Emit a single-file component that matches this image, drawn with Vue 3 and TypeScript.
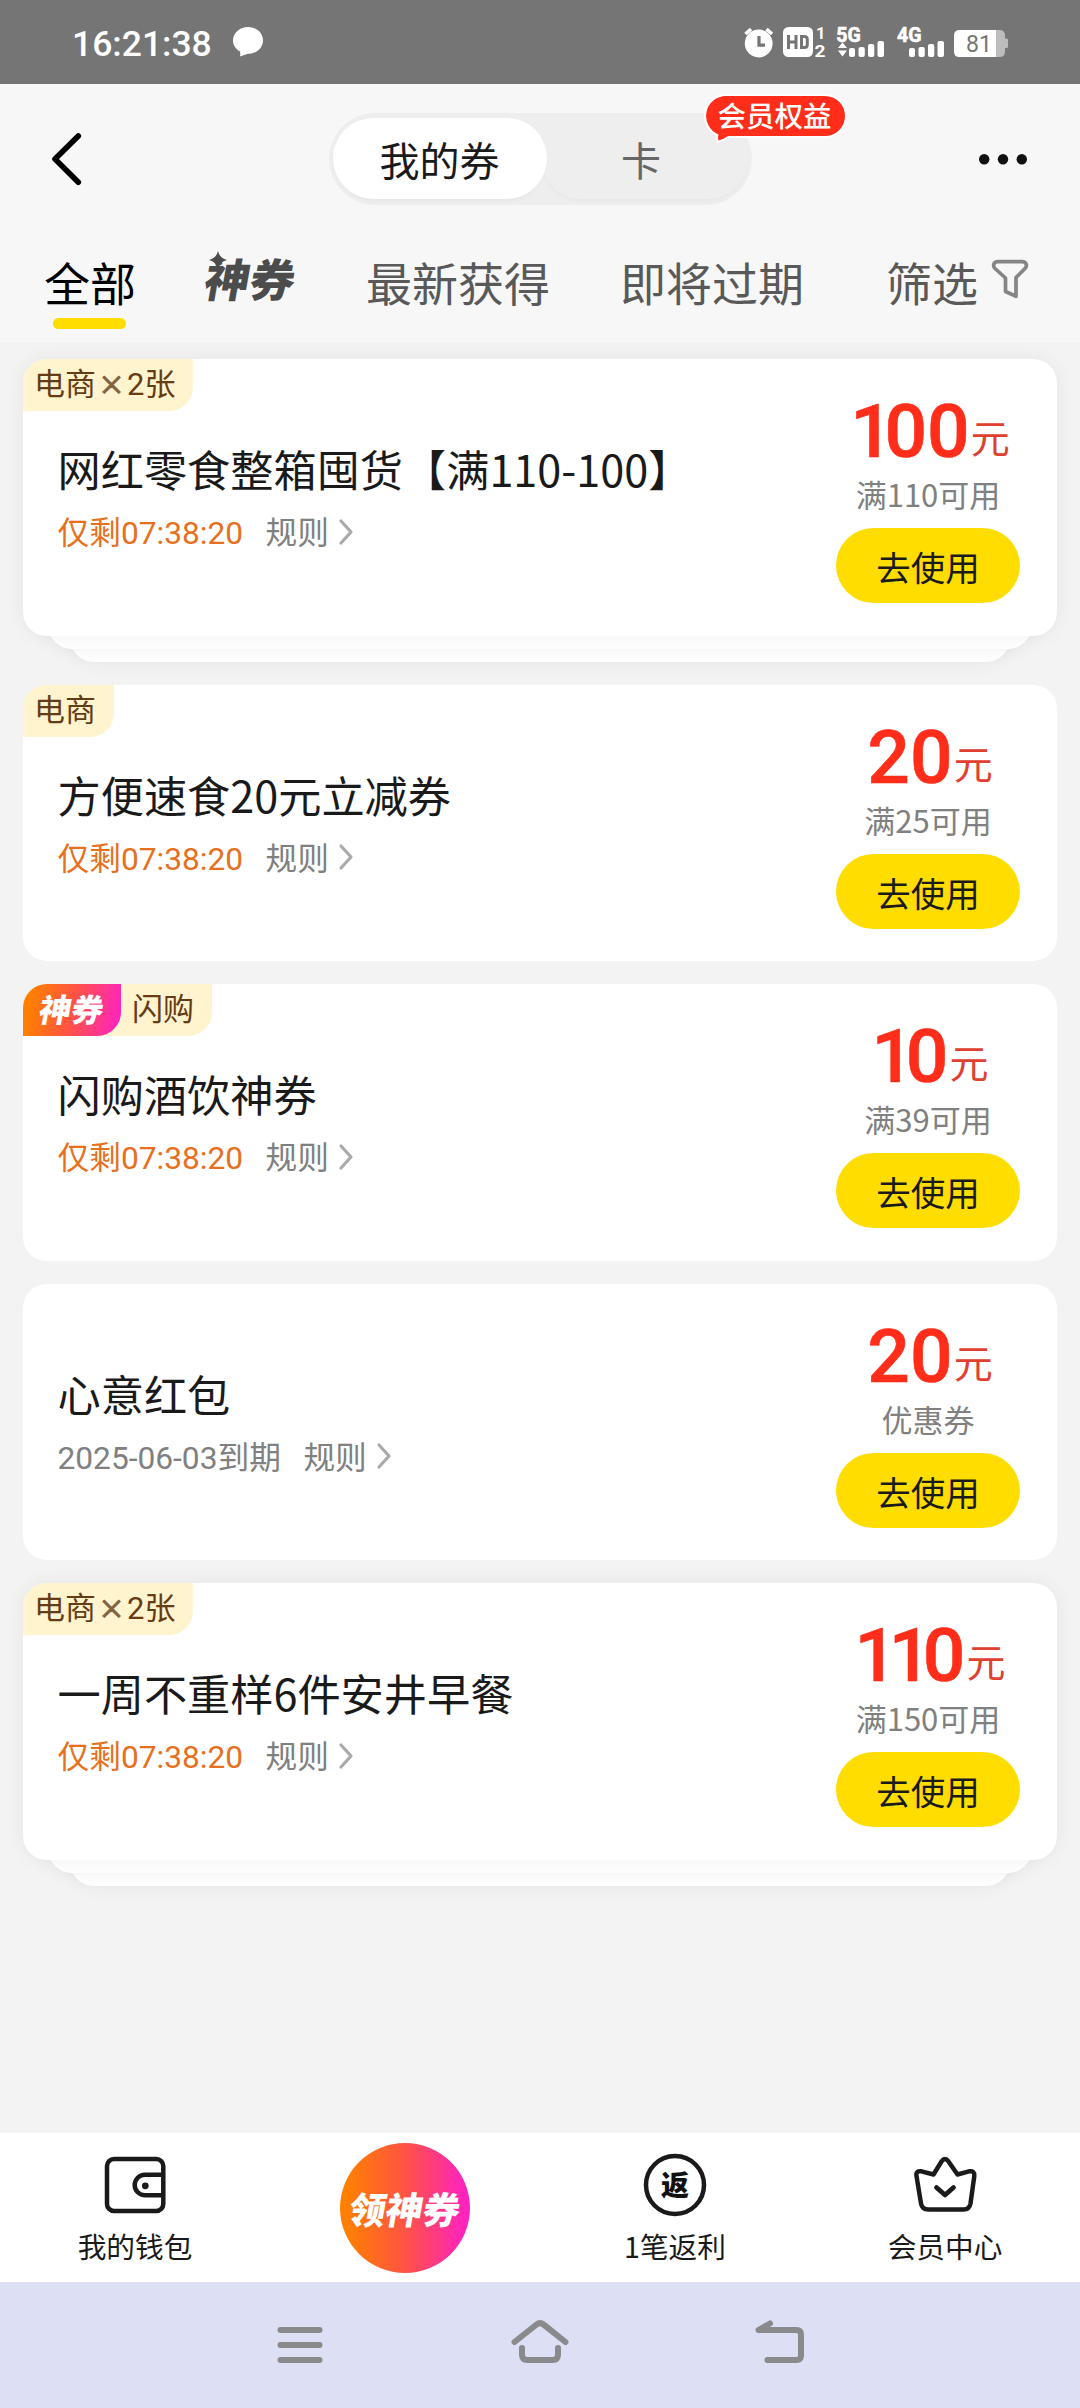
<script setup lang="ts">
interface Coupon {
  tag?: string
  count?: number
  magic?: boolean
  title: string
  left?: string
  expire?: string
  amount: string
  limit: string
  stacked?: boolean
}

const coupons: Coupon[] = [
  { tag: '电商', count: 2, title: '网红零食整箱囤货【满110-100】', left: '07:38:20', amount: '100', limit: '满110可用', stacked: true },
  { tag: '电商', title: '方便速食20元立减券', left: '07:38:20', amount: '20', limit: '满25可用' },
  { tag: '闪购', magic: true, title: '闪购酒饮神券', left: '07:38:20', amount: '10', limit: '满39可用' },
  { title: '心意红包', expire: '2025-06-03', amount: '20', limit: '优惠券' },
  { tag: '电商', count: 2, title: '一周不重样6件安井早餐', left: '07:38:20', amount: '110', limit: '满150可用', stacked: true },
]
</script>

<template>
  <div class="page">
    <div class="status">
      <span class="clock">16:21:38</span>
      <svg class="bubble" width="30" height="30" viewBox="0 0 30 30">
        <path d="M15 0C23.300 0 30 6 30 13.400S23.300 26.800 15 26.800C12.500 27.600 10 28.600 7.200 29.500V24.600C2.900 22.200 0 18.200 0 13.400 0 6 6.700 0 15 0Z" fill="#fff" />
      </svg>
      <svg class="sys" width="270" height="54" viewBox="742 15 270 54">
        <g fill="#fff">
          <circle cx="758.700" cy="43.500" r="13.900" />
          <path d="M745.500 34L751 29M772 34L766.500 29" stroke="#fff" stroke-width="3.600" />
          <path d="M759 36V45.200H765" fill="none" stroke="#757575" stroke-width="3.200" />
          <rect x="783" y="27" width="30" height="30" rx="5.500" />
          <path d="M788.500 35V49M796 35V49M788.500 42H796M801.500 36.500H804.500Q807.300 36.500 807.300 39.500V44.500Q807.300 47.500 804.500 47.500H801.500Z" fill="none" stroke="#757575" stroke-width="3" />
          <path d="M842.500 42.500L847 48H838ZM842.500 56.500L847 50.500H838Z" />
          <rect x="849" y="48" width="6" height="9" rx="2" />
          <rect x="858.500" y="47" width="6.300" height="10" rx="2" />
          <rect x="868" y="44" width="6.300" height="13" rx="2" />
          <rect x="877.500" y="41" width="6.500" height="16" rx="2" />
          <rect x="909" y="48" width="6" height="9" rx="2" />
          <rect x="918.500" y="47" width="6.300" height="10" rx="2" />
          <rect x="928" y="44" width="6.300" height="13" rx="2" />
          <rect x="937.500" y="41" width="6.500" height="16" rx="2" />
        </g>
        <path d="M996 30H999.500Q1005 30 1005 35.500V38.500H1006.500Q1008 38.500 1008 40V46.500Q1008 48 1006.500 48H1005V51.500Q1005 57 999.500 57H996Z" fill="#bcbcbc" />
        <path d="M996 30V57H959.500Q954 57 954 51.500V35.500Q954 30 959.500 30Z" fill="#fff" />
        <g class="systext">
          <text x="816" y="39" font-size="16.500">1</text>
          <text x="814.500" y="57" font-size="17" textLength="11" lengthAdjust="spacingAndGlyphs">2</text>
          <text class="net" x="836.300" y="41.800" font-size="20.500" textLength="24.500" lengthAdjust="spacingAndGlyphs">5G</text>
          <text class="net" x="897" y="41.800" font-size="20.500" textLength="24.500" lengthAdjust="spacingAndGlyphs">4G</text>
          <text class="level" x="966" y="52" font-size="23">81</text>
        </g>
      </svg>
    </div>

    <div class="top">
      <div class="header">
        <svg width="40" height="60" viewBox="48 129 40 60">
          <path d="M78.300 136L55 159L78.300 182.300" fill="none" stroke="#000" stroke-width="5.600" stroke-linecap="round" stroke-linejoin="round" />
        </svg>
        <div class="segment">
          <div class="seg on">我的券</div>
          <div class="seg">卡</div>
          <div class="promo">
            <svg width="145" height="50" viewBox="702 93 145 50">
              <path d="M725 96H824A20 20 0 0 1 824 136H727Q722 139.500 717.500 140.500Q716.500 138 717.500 134.500A20 20 0 0 1 725 96Z" fill="#ff2d19" stroke="#fff" stroke-width="4" paint-order="stroke" />
            </svg>
            <span>会员权益</span>
          </div>
        </div>
        <svg width="60" height="20" viewBox="973 148 60 20" fill="#111">
          <circle cx="984.200" cy="158.200" r="5.200" /><circle cx="1003" cy="158.200" r="5.200" /><circle cx="1021.800" cy="158.200" r="5.200" />
        </svg>
      </div>
      <div class="tabs">
        <div class="tab active">全部</div>
        <div class="tab logo"><span>神券</span>
          <svg width="18" height="18" viewBox="0 0 18 18"><path d="M9 0Q10.500 7 18 9Q10.500 11 9 18Q7.500 11 0 9Q7.500 7 9 0Z" fill="#4c4c4c" /></svg>
        </div>
        <div class="tab latest">最新获得</div>
        <div class="tab soon">即将过期</div>
        <div class="tab filter">筛选</div>
        <svg class="funnel" width="38" height="42" viewBox="991 258 38 42">
          <path d="M998 261.700H1022C1026.500 261.700 1027.500 266 1025 268.500L1016 277.500V296.300L1005.500 291.500V278L995 268.500C992.500 266 993.500 261.700 998 261.700Z" fill="none" stroke="#858585" stroke-width="3.700" stroke-linejoin="round" />
        </svg>
      </div>
    </div>

    <div class="list">
      <div v-for="(c, i) in coupons" :key="i" class="item" :class="{ stacked: c.stacked }">
        <div class="card">
          <div v-if="c.tag" class="tags">
            <div v-if="c.magic" class="magic"><span>神券</span></div>
            <div class="tag">{{ c.tag }}<template v-if="c.count"><span class="times">×</span><span class="num">{{ c.count }}</span>张</template></div>
          </div>
          <div class="info">
            <div class="title">{{ c.title }}</div>
            <div class="meta">
              <span v-if="c.left" class="remain">仅剩<span class="num">{{ c.left }}</span></span>
              <span v-else><span class="num">{{ c.expire }}</span>到期</span>
              <span class="rule">规则</span>
              <svg width="16" height="28" viewBox="0 0 16 28"><path d="M3 3L13 14L3 25" fill="none" stroke="#aaa" stroke-width="3.200" stroke-linecap="round" stroke-linejoin="round" /></svg>
            </div>
          </div>
          <div class="action">
            <div class="amount"><span v-for="(d, k) in c.amount.split('')" :key="k" class="digit" :class="{ one: d === '1' }">{{ d }}</span><span class="yuan">元</span></div>
            <div class="limit">{{ c.limit }}</div>
            <div class="btn">去使用</div>
          </div>
        </div>
        <template v-if="c.stacked">
          <div class="layer first"></div>
          <div class="layer second"></div>
        </template>
      </div>
    </div>

    <div class="dock">
      <div class="entry">
        <svg width="70" height="66" viewBox="100 2152 70 66" fill="none" stroke="#1a1a1a" stroke-width="4.500">
          <rect x="107" y="2159" width="56.300" height="52" rx="7" />
          <path d="M163 2174.700H145A10.300 10.300 0 0 0 145 2195.300H163" />
          <circle cx="145.300" cy="2185.800" r="3.400" fill="#1a1a1a" stroke="none" />
        </svg>
        <span>我的钱包</span>
      </div>
      <div class="entry"><div class="grab"><span>领神券</span></div></div>
      <div class="entry">
        <svg width="70" height="66" viewBox="640 2152 70 66">
          <circle cx="675" cy="2185" r="29" fill="none" stroke="#1a1a1a" stroke-width="4.500" />
          <text class="fan" x="675" y="2196" text-anchor="middle">返</text>
        </svg>
        <span>1笔返利</span>
      </div>
      <div class="entry">
        <svg width="70" height="66" viewBox="910 2152 70 66" fill="none" stroke="#1a1a1a" stroke-width="4.500" stroke-linejoin="round" stroke-linecap="round">
          <path d="M933.500 2174.500L941.500 2161.500Q945 2156.500 948.500 2161.500L957.500 2174.500L969 2171.300Q975 2170.500 974.300 2176L970.500 2203.500Q969.500 2209.500 963.500 2209.500H928.500Q922 2209.500 921 2203.500L916.500 2176Q915.500 2170.500 921.500 2171.300Z" />
          <path d="M936.500 2187.500L945 2195L953.500 2187.500" stroke-width="4.800" />
        </svg>
        <span>会员中心</span>
      </div>
    </div>

    <div class="nav">
      <svg width="540" height="60" viewBox="270 2315 540 60" fill="none" stroke="#8a8a8c" stroke-width="6" stroke-linecap="round" stroke-linejoin="round">
        <path d="M280.500 2330H319.500M280.500 2345H319.500M280.500 2360H319.500" />
        <path d="M514.500 2342L536.500 2324.500Q540 2321.800 543.500 2324.500L565.500 2342M522 2348V2354.500Q522 2360 527.500 2360H552.500Q558 2360 558 2354.500V2348" />
        <path d="M770 2323.500L758.500 2330H796.500Q801 2330 801 2334.500V2355.500Q801 2360 796.500 2360H767.500" />
      </svg>
    </div>
  </div>
</template>

<style>
body {
  background: #f3f3f3;
}
</style>

<style scoped>
.page {
  width: 1080px;
  height: 2408px;
  display: flex;
  flex-direction: column;
  background: #f3f3f3;
  font-family: "Noto Sans CJK SC", sans-serif;
  color: #1a1a1a;
  overflow: hidden;
  white-space: nowrap;
}
svg {
  display: block;
  flex: none;
}
.num {
  font-family: Roboto, sans-serif;
  line-height: 1;
}
.status {
  height: 84px;
  flex: none;
  background: #757575;
  display: flex;
  align-items: flex-start;
}
.clock {
  width: 138px;
  margin-left: 72px;
  font: 500 35.500px/42px Roboto, sans-serif;
  color: #fff;
  margin-top: 23px;
}
.bubble {
  margin: 27px 0 0 23px;
}
.sys {
  margin: 15px 68px 0 auto;
}
.systext {
  font-family: Roboto, sans-serif;
  font-weight: 700;
  fill: #fff;
}
.net {
  stroke: #fff;
  stroke-width: 0.6px;
}
.level {
  font-weight: 400;
  fill: #757575;
}
.top {
  height: 258px;
  flex: none;
  background: #f7f7f7;
}
.header {
  height: 150px;
  padding: 0 47px 0 48px;
  display: flex;
  align-items: center;
  justify-content: space-between;
}
.segment {
  position: relative;
  width: 415px;
  height: 82px;
  padding: 5px 4px;
  margin-left: 19px;
  border-radius: 46px;
  background: #eee;
  display: flex;
}
.seg {
  width: 214px;
  height: 81px;
  border-radius: 41px;
  font-size: 40px;
  line-height: 82px;
  text-align: center;
  color: #666;
  box-shadow: 0 3px 4px -1px rgba(0, 0, 0, 0.035);
}
.seg + .seg {
  width: 201px;
  padding-right: 6px;
  margin-left: -6px;
}
.seg.on {
  background: #fff;
  color: #1a1a1a;
  position: relative;
  z-index: 1;
}
.promo {
  position: absolute;
  z-index: 2;
  left: 374px;
  top: -20px;
}
.promo span {
  position: absolute;
  left: 15px;
  top: 2px;
  font-size: 28.500px;
  line-height: 40px;
  font-weight: 500;
  color: #fff;
}
.tabs {
  height: 108px;
  padding-left: 44px;
  display: flex;
  align-items: flex-start;
}
.tab {
  font-size: 46px;
  line-height: 60px;
  margin-top: 17px;
  color: #595959;
}
.tab.active {
  width: 92px;
  height: 78px;
  color: #000;
  position: relative;
}
.tab.active::after {
  content: "";
  position: absolute;
  left: 9px;
  bottom: 0;
  width: 73px;
  height: 11px;
  border-radius: 6px;
  background: #fd0;
}
.tab.logo {
  position: relative;
  width: 92px;
  margin-left: 69px;
  color: #4c4c4c;
}
.tab.logo span {
  display: block;
  font-size: 45px;
  font-weight: 900;
  transform: skewX(-10deg) translateY(-3px);
}
.tab.logo svg {
  position: absolute;
  left: 4px;
  top: 0;
}
.tab.latest {
  margin-left: 69px;
}
.tab.soon {
  margin-left: 70px;
}
.tab.filter {
  margin-left: 82px;
}
.funnel {
  margin: 24px 0 0 13px;
}
.list {
  flex: 1;
  padding: 17px 23px 0;
}
.item {
  position: relative;
  margin-bottom: 23px;
}
.item.stacked {
  padding-bottom: 26px;
}
.card {
  position: relative;
  z-index: 3;
  height: 276.500px;
  border-radius: 24px;
  background: #fff;
  display: flex;
  justify-content: space-between;
}
.stacked .card,
.layer {
  box-shadow: 0 0 20px rgba(0, 0, 0, 0.06);
}
.layer {
  position: absolute;
  height: 60px;
  border-radius: 24px;
  background: #fff;
}
.layer.first {
  z-index: 2;
  left: 25px;
  right: 25px;
  bottom: 13px;
}
.layer.second {
  z-index: 1;
  left: 47px;
  right: 47px;
  bottom: 0;
}
.tags {
  position: absolute;
  left: 0;
  top: 0;
  display: flex;
  height: 52px;
  border-radius: 24px 0 24px 0;
  background: #fff4cd;
}
.tag {
  padding: 0 18px 0 11px;
  font-size: 31px;
  line-height: 46px;
  height: 52px;
  color: #663c16;
}
.times {
  display: inline-block;
  width: 31px;
  font-size: 27px;
  font-weight: 500;
  line-height: 1;
  text-align: center;
  color: #84613f;
  -webkit-text-stroke: 0.8px #84613f;
}
.magic {
  width: 98px;
  border-radius: 24px 0 24px 0;
  background: linear-gradient(100deg, #ff8000 8%, #ff5344 50%, #ff24bd 95%);
  color: #fff;
  font-size: 32px;
  font-weight: 900;
  line-height: 49px;
  text-align: center;
}
.magic span {
  display: block;
  transform: skewX(-10deg);
}
.info {
  padding: 82px 0 0 34.500px;
}
.title {
  font-size: 43.200px;
  line-height: 55px;
}
.meta {
  display: flex;
  align-items: center;
  margin-top: 12px;
  height: 44px;
  font-size: 31.700px;
  line-height: 44px;
  color: #808080;
}
.remain {
  color: #e6701e;
}
.rule {
  margin: 0 9px 0 22.500px;
}
.meta svg {
  margin-top: 3px;
}
.action {
  width: 184px;
  margin-right: 37px;
  display: flex;
  flex-direction: column;
  align-items: center;
}
.amount {
  height: 114px;
  padding: 34px 0 0 4px;
  box-sizing: border-box;
  display: flex;
  align-items: baseline;
  color: #ff2d19;
}
.digit {
  font: 500 75px/76px Roboto, sans-serif;
  -webkit-text-stroke: 0.6px #ff2d19;
}
.digit.one {
  letter-spacing: -8.5px;
}
.yuan {
  position: relative;
  top: -4px;
  font-size: 39px;
  line-height: 50px;
  color: #e0402f;
  margin-left: 1px;
}
.limit {
  height: 44px;
  margin-top: -1px;
  font-size: 31px;
  line-height: 44px;
  color: #808080;
}
.btn {
  width: 184px;
  height: 75px;
  margin-top: 12px;
  border-radius: 38px;
  background: #fd0;
  font-size: 34.500px;
  line-height: 77px;
  text-align: center;
}
.dock {
  height: 149px;
  flex: none;
  background: #fff;
  display: flex;
}
.entry {
  width: 270px;
  display: flex;
  flex-direction: column;
  align-items: center;
  padding-top: 19px;
  font-size: 28.700px;
  line-height: 40px;
}
.entry > span {
  margin-top: 8px;
}
.fan {
  font-size: 28px;
  font-weight: 900;
  fill: #111;
}
.grab {
  width: 130px;
  height: 130px;
  margin-top: -9px;
  border-radius: 50%;
  background: linear-gradient(90deg, #ff8000 5%, #ff5344 50%, #ff24bd 95%);
  color: #fff;
  font-size: 37px;
  font-weight: 900;
  line-height: 130px;
  text-align: center;
}
.grab span {
  display: block;
  margin: 0 -10px;
  transform: skewX(-10deg);
}
.nav {
  height: 126px;
  flex: none;
  background: #dddff4;
  display: flex;
  justify-content: center;
  padding-top: 33px;
  box-sizing: border-box;
}
</style>
